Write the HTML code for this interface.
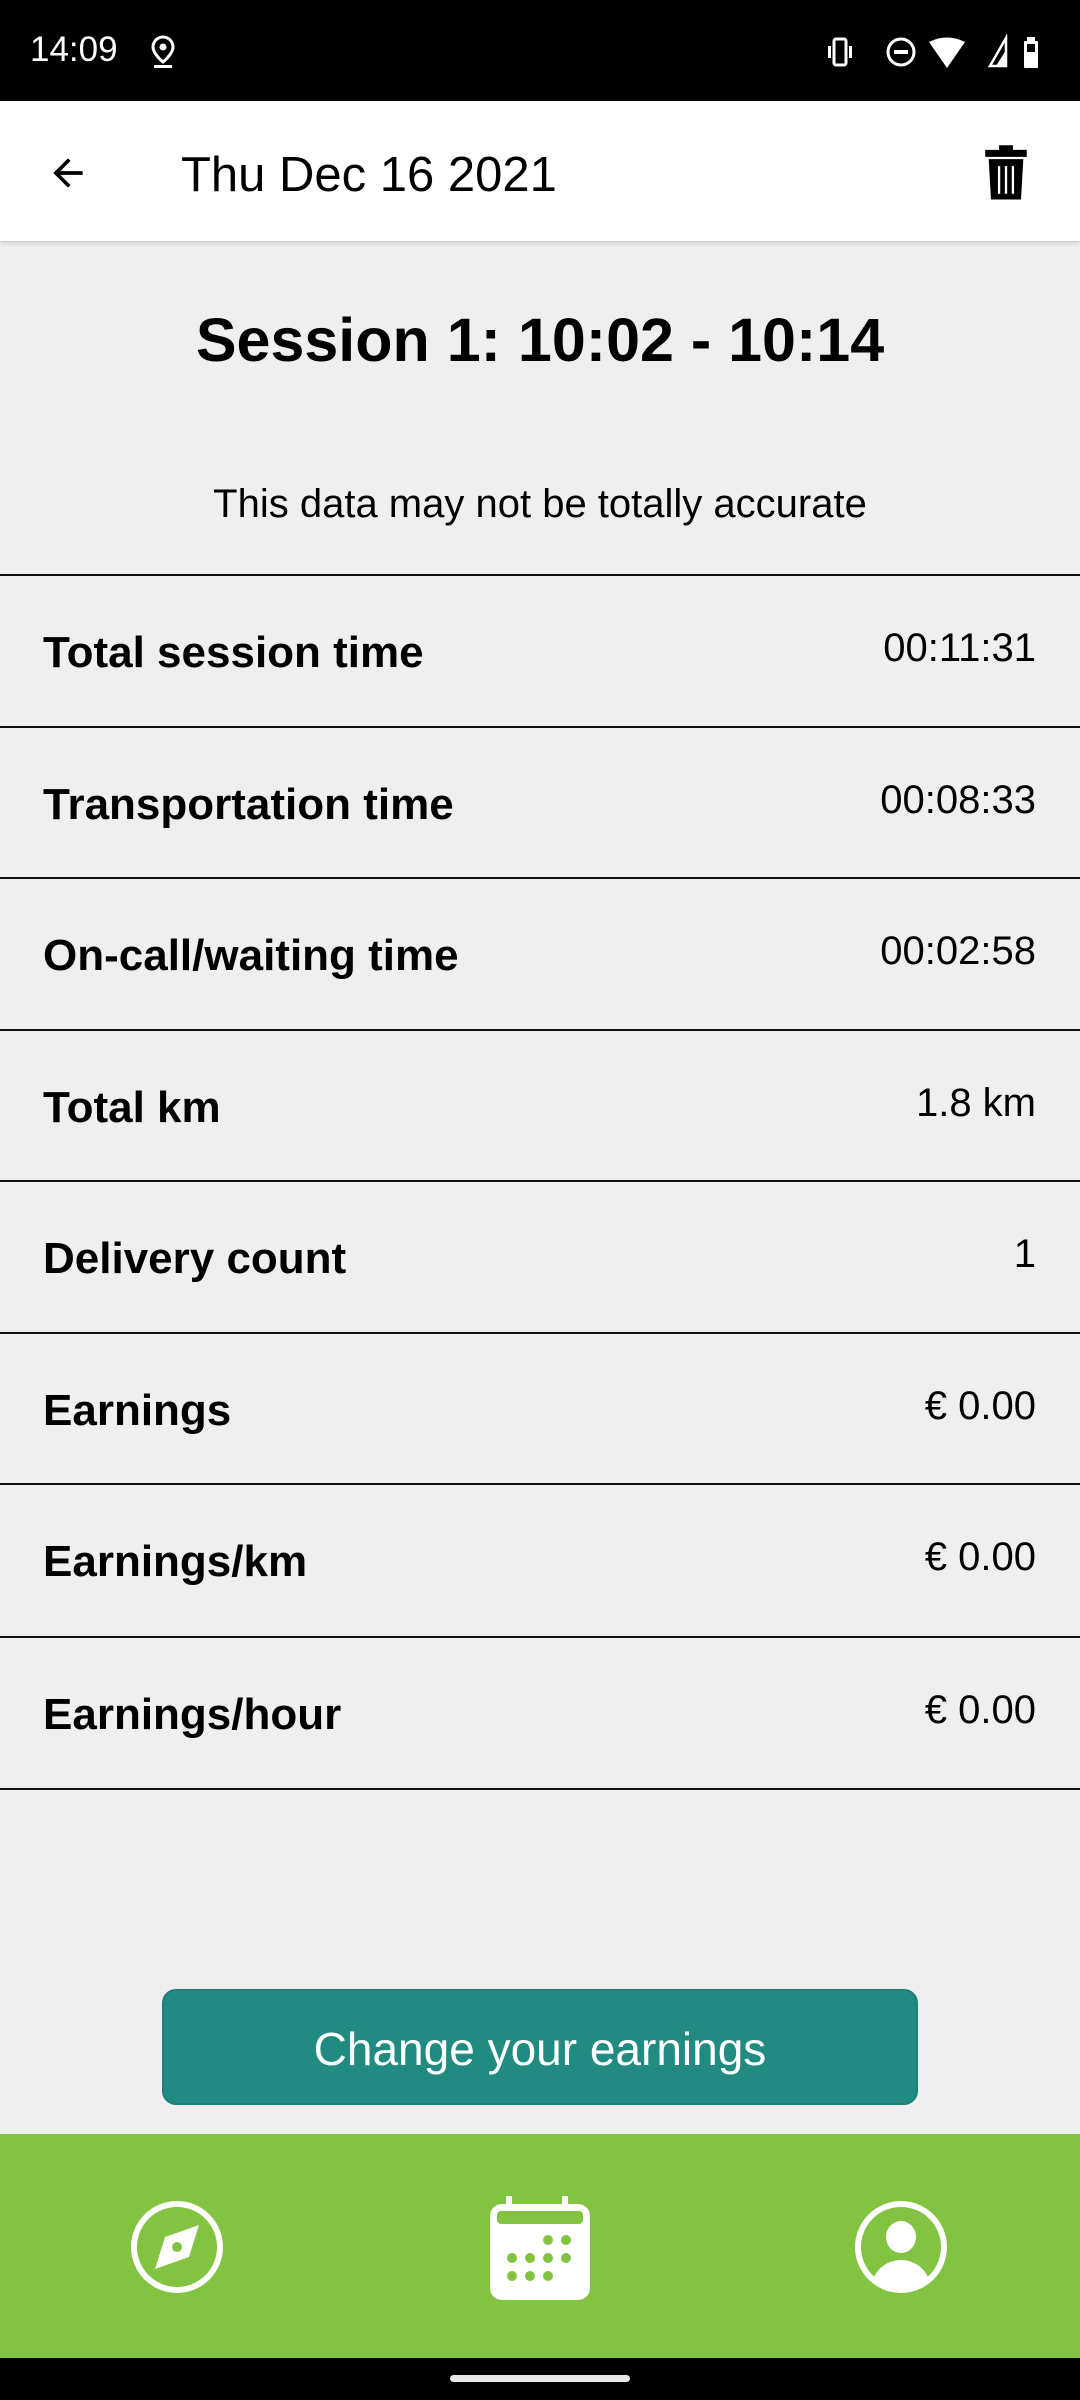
<!DOCTYPE html>
<html><head><meta charset="utf-8"><style>
*{margin:0;padding:0;box-sizing:border-box}
body{width:1080px;height:2400px;background:#efefef;font-family:"Liberation Sans",sans-serif;position:relative;overflow:hidden;color:#000}
.sb{position:absolute;left:0;top:0;width:1080px;height:101px;background:#000;color:#fff}
.ab{position:absolute;left:0;top:101px;width:1080px;height:140px;background:#fff;box-shadow:0 2px 4px rgba(0,0,0,.15)}
.title{position:absolute;top:305px;width:1080px;text-align:center;font-weight:bold;font-size:61px}
.note{position:absolute;top:482px;width:1080px;text-align:center;font-size:40px}
.row{position:absolute;left:0;width:1080px;height:152px;border-top:2px solid #111}
.row .l{position:absolute;left:43px;top:52px;font-weight:bold;font-size:44px}
.row .v{position:absolute;right:44px;top:50px;font-size:40px}
.btn{position:absolute;left:162px;top:1989px;width:756px;height:116px;background:#218b82;border-radius:14px;color:#fff;font-size:46px;text-align:center;line-height:116px;border:2px solid #1d7f77}
.nav{position:absolute;left:0;top:2134px;width:1080px;height:224px;background:#82c341}
.bot{position:absolute;left:0;top:2358px;width:1080px;height:42px;background:#000}
</style></head><body>
<div class="sb">
<div style="position:absolute;left:30px;top:30px;font-size:35px">14:09</div>
<svg style="position:absolute;left:148px;top:34px" width="30" height="36" viewBox="0 0 30 36"><path d="M15 3a10 10 0 0 1 10 10c0 7-10 15-10 15S5 20 5 13A10 10 0 0 1 15 3z" fill="none" stroke="#fff" stroke-width="3"/><circle cx="15" cy="13" r="3.5" fill="#fff"/><rect x="6" y="31" width="18" height="3" fill="#fff"/></svg>
<svg style="position:absolute;left:824px;top:34px" width="220" height="36" viewBox="0 0 220 36">
<rect x="4" y="12" width="3" height="12" fill="#fff"/><rect x="10" y="5" width="12" height="26" rx="2" fill="none" stroke="#fff" stroke-width="3"/><rect x="25" y="12" width="3" height="12" fill="#fff"/>
<circle cx="77" cy="18" r="13" fill="none" stroke="#fff" stroke-width="3"/><rect x="70" y="16" width="14" height="4" fill="#fff"/>
<path d="M105 8q18-9 36 0l-18 26z" fill="#fff"/>
<path d="M166 32L182 4v28z" fill="none" stroke="#fff" stroke-width="2.5"/><path d="M172 32L182 16v16z" fill="#fff"/>
<rect x="203" y="3" width="8" height="4" fill="#fff"/><rect x="200" y="7" width="14" height="27" rx="1" fill="#fff"/><rect x="203" y="10" width="8" height="8" fill="#000"/>
</svg>
</div>
<div class="ab">
<svg style="position:absolute;left:46px;top:50px" width="44" height="44" viewBox="0 0 24 24"><path d="M20 11H7.8l5.6-5.6L12 4l-8 8 8 8 1.4-1.4L7.8 13H20z" fill="#000"/></svg>
<div style="position:absolute;left:181px;top:46px;font-size:49px;font-weight:500">Thu Dec 16 2021</div>
<svg style="position:absolute;left:978px;top:42px" width="56" height="60" viewBox="0 0 24 26"><path d="M9 1h6v2h6v3H3V3h6z" fill="#000"/><path d="M4.5 7h15l-1 17.5H5.5z" fill="#000"/><path d="M9 10v12M12 10v12M15 10v12" stroke="#fff" stroke-width="1"/></svg>
</div>
<div class="title">Session 1: 10:02 - 10:14</div>
<div class="note">This data may not be totally accurate</div>
<div class="row" style="top:574px"><span class="l">Total session time</span><span class="v">00:11:31</span></div>
<div class="row" style="top:726px"><span class="l">Transportation time</span><span class="v">00:08:33</span></div>
<div class="row" style="top:877px"><span class="l">On-call/waiting time</span><span class="v">00:02:58</span></div>
<div class="row" style="top:1029px"><span class="l">Total km</span><span class="v">1.8 km</span></div>
<div class="row" style="top:1180px"><span class="l">Delivery count</span><span class="v">1</span></div>
<div class="row" style="top:1332px"><span class="l">Earnings</span><span class="v">€ 0.00</span></div>
<div class="row" style="top:1483px"><span class="l">Earnings/km</span><span class="v">€ 0.00</span></div>
<div class="row" style="top:1636px;height:154px;border-bottom:2px solid #111"><span class="l">Earnings/hour</span><span class="v">€ 0.00</span></div>
<div class="btn">Change your earnings</div>
<div class="nav">
<svg style="position:absolute;left:130px;top:66px" width="94" height="94" viewBox="0 0 94 94"><circle cx="47" cy="47" r="43" fill="none" stroke="#fff" stroke-width="6"/><path d="M69 25L59 57 25 69 35 37z" fill="#fff"/><circle cx="47" cy="47" r="5" fill="#82c341"/></svg>
<svg style="position:absolute;left:490px;top:62px" width="100" height="104" viewBox="0 0 100 104"><rect x="16" y="0" width="6" height="12" fill="#fff"/><rect x="72" y="0" width="6" height="12" fill="#fff"/><rect x="0" y="8" width="100" height="96" rx="12" fill="#fff"/><rect x="7" y="15" width="86" height="13" rx="4" fill="#82c341"/>
<g fill="#82c341"><circle cx="58" cy="44" r="5"/><circle cx="76" cy="44" r="5"/><circle cx="22" cy="62" r="5"/><circle cx="40" cy="62" r="5"/><circle cx="58" cy="62" r="5"/><circle cx="76" cy="62" r="5"/><circle cx="22" cy="80" r="5"/><circle cx="40" cy="80" r="5"/><circle cx="58" cy="80" r="5"/></g></svg>
<svg style="position:absolute;left:854px;top:66px" width="94" height="94" viewBox="0 0 94 94"><defs><clipPath id="c"><circle cx="47" cy="47" r="43"/></clipPath></defs><circle cx="47" cy="47" r="43" fill="none" stroke="#fff" stroke-width="6"/><ellipse cx="47" cy="37" rx="15" ry="16" fill="#fff"/><ellipse cx="47" cy="90" rx="30" ry="30" fill="#fff" clip-path="url(#c)"/></svg>
</div>
<div class="bot"><div style="position:absolute;left:450px;top:17px;width:180px;height:7px;border-radius:4px;background:#e8e8e8"></div></div>
</body></html>
